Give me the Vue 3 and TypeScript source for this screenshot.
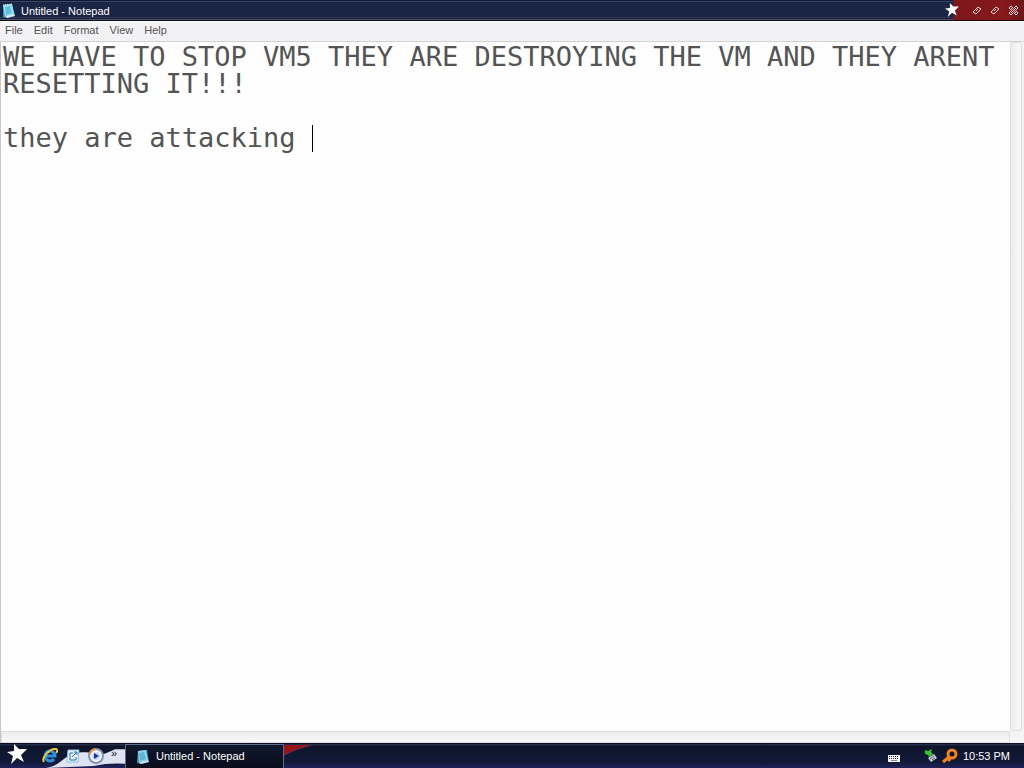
<script setup lang="ts">
import { ref } from 'vue'

const menus: string[] = ['File', 'Edit', 'Format', 'View', 'Help']
const body = ref<string>(
  'WE HAVE TO STOP VM5 THEY ARE DESTROYING THE VM AND THEY ARENT RESETTING IT!!!\n\nthey are attacking ',
)
</script>

<template>
  <div class="desktop">
    <main class="window">
      <header class="titlebar">
        <svg class="note" viewBox="0 0 16 16" aria-hidden="true">
          <path d="M2 2l9-1 3 11-8 3-4-1z" fill="#3f93b5" />
          <path d="M2 2l9-1 2 10-9 2z" fill="#9be2f2" />
          <path d="M4 4l5-1 2 7-6 2z" fill="#62bfdc" />
          <path d="M2 2l9-1" stroke="#e4f8fc" stroke-dasharray="1 1" />
          <path d="M4 13l9-2 1 2-8 2z" fill="#d6eef4" />
        </svg>
        <h1>Untitled - Notepad</h1>
        <div class="controls">
          <svg class="star" viewBox="0 0 20 20" aria-hidden="true">
            <path d="M7 0L12 5L20 5L14 11L17 18L10 14L4 20L6 12L0 8L7 7z" fill="#fff" />
          </svg>
          <button type="button" aria-label="Minimize">
            <svg viewBox="0 0 11 11"><path d="M1 7l5-5 3 2-5 5zM4 6l2-2M6 7l1-1" /></svg>
          </button>
          <button type="button" aria-label="Restore">
            <svg viewBox="0 0 11 11"><path d="M1 7l5-5 3 2-5 5zM4 6l2-2M6 7l1-1" /></svg>
          </button>
          <button type="button" aria-label="Close">
            <svg viewBox="0 0 11 11"><path d="M1 3l2-2 2.500 2.500L8 1l2 2-2.500 2.500L10 8l-2 2-2.500-2.500L3 10 1 8l2.500-2.500zM3 3l5 5M8 3L3 8" /></svg>
          </button>
        </div>
      </header>
      <nav class="menubar" aria-label="Menu">
        <button v-for="m in menus" :key="m" type="button">{{ m }}</button>
      </nav>
      <section class="editor">
        <div class="page">
          <textarea v-model="body" aria-label="Document text" spellcheck="false"></textarea>
          <span class="caret" aria-hidden="true"></span>
        </div>
        <div class="vbar"></div>
        <div class="hbar"></div>
        <div class="corner"></div>
      </section>
    </main>
    <footer class="taskbar">
      <button class="start" type="button" aria-label="Start">
        <svg viewBox="0 0 20 20"><path d="M7 0L12 5L20 5L14 11L17 18L10 14L4 20L6 12L0 8L7 7z" fill="#fff" /></svg>
      </button>
      <div class="quick">
        <svg class="swoosh" viewBox="0 0 84 24" preserveAspectRatio="none" aria-hidden="true">
          <path d="M4 24C20 22 22 10 38 9C52 8 54 13 64 10L74 6H84V20Q68 19 52 22z" fill="#dfe2f0" />
        </svg>
        <button type="button" aria-label="Internet Explorer">
          <svg viewBox="0 0 16 16">
            <path d="M12 11a5 5 0 1 1 1-3H4" fill="none" stroke="#2c8fdc" stroke-width="3" />
            <path d="M2 14C-1 10 8 0 14 1c2 1 1 3 0 4" fill="none" stroke="#e9c63d" stroke-width="2" />
          </svg>
        </button>
        <button type="button" aria-label="Show Desktop">
          <svg viewBox="0 0 16 16">
            <path d="M3 2h11l-1 12H2z" fill="#e4f2fb" stroke="#8fc0e2" stroke-width="1" />
            <path d="M8 5H5v7h6V9M7 9l5-5M9 4h3v3" fill="none" stroke="#2870ad" stroke-width="1" />
          </svg>
        </button>
        <button type="button" aria-label="Media Player">
          <svg viewBox="0 0 16 16">
            <circle cx="8" cy="8" r="7" fill="#f4f7ff" stroke="#8493b4" stroke-width="2" />
            <path d="M2 6a6 6 0 0 1 6-5" fill="none" stroke="#e58b36" stroke-width="2" />
            <circle cx="8" cy="8" r="4" fill="#c7dafa" />
            <path d="M6 5l5 3-5 3z" fill="#16369a" />
          </svg>
        </button>
        <button class="more" type="button" aria-label="More">»</button>
      </div>
      <button class="task" type="button">
        <svg class="note" viewBox="0 0 16 16" aria-hidden="true">
          <path d="M3 2l9-1 2 12-8 2-4-1z" fill="#3f93b5" />
          <path d="M3 2l8-1 2 10-9 2z" fill="#8fd4ea" />
          <path d="M4 4l5-1 2 7-6 2z" fill="#62b3d8" />
          <path d="M4 13l9-2 1 2-8 2z" fill="#c6e2ee" />
        </svg>
        <span>Untitled - Notepad</span>
      </button>
      <svg class="flag" viewBox="0 0 30 24" aria-hidden="true">
        <path d="M0 2h28Q14 5 0 12z" fill="#971419" />
        <path d="M0 12Q14 5 28 2" fill="none" stroke="#5b3348" />
      </svg>
      <div class="tray">
        <svg class="keyboard" viewBox="0 0 12 8" aria-label="Keyboard">
          <rect y="1" width="12" height="7" fill="#f4f4f4" />
          <path d="M1 2.500h10M1 4.500h10" stroke="#23233a" stroke-dasharray="1 1" />
          <path d="M3 6.500h6" stroke="#8a8a98" />
        </svg>
        <svg class="usb" viewBox="0 0 14 15" aria-label="Safely Remove Hardware">
          <path d="M4 10l6-4 3 4-6 4z" fill="#c6ccd2" />
          <path d="M6 11l4-3M8 12l3-2" stroke="#59606c" />
          <path d="M1 2l3 1 4-2-1 3 2 2-4 3-1-2-3-1z" fill="#34c434" />
        </svg>
        <svg class="finder" viewBox="0 0 16 16" aria-label="Search">
          <circle cx="10" cy="6" r="4" fill="none" stroke="#f08322" stroke-width="3" />
          <path d="M7 9l-6 5M5 9l3 4" stroke="#f08322" stroke-width="3" />
        </svg>
        <time>10:53 PM</time>
      </div>
    </footer>
  </div>
</template>

<style>
html,
body {
  margin: 0;
  overflow: hidden;
}
</style>

<style scoped>
.desktop {
  display: flex;
  flex-direction: column;
  height: 100vh;
  font-family: 'Liberation Sans', sans-serif;
  font-size: 11px;
  line-height: 13px;
}
button {
  margin: 0;
  padding: 0;
  border: 0;
  background: none;
  color: inherit;
  font: inherit;
}
svg {
  display: block;
  flex: none;
}
.window {
  flex: 1;
  min-height: 0;
  display: flex;
  flex-direction: column;
}
.titlebar {
  display: flex;
  align-items: center;
  flex: none;
  height: 21px;
  box-sizing: border-box;
  padding-left: 1px;
  background: linear-gradient(#101a38 0 1px, #38425e 1px 2px, #1a2645 2px, #1a2344 17px, #363b5a 17px 18px, #151a38 18px 19px, #56566c 19px 20px, #080a18 20px);
  color: #fff;
}
.note {
  width: 16px;
  height: 16px;
}
h1 {
  flex: 1;
  margin: 0 0 0 4px;
  padding-top: 2px;
  font-size: 11px;
  font-weight: 400;
}
.controls {
  display: flex;
  align-items: center;
  align-self: stretch;
  gap: 7px;
  padding-right: 5px;
  background: linear-gradient(90deg, transparent 8px, #7d171b 9px, #86191c 60px, #6b1519 100%);
  border-bottom: 1px solid #1a0609;
}
.star {
  width: 14px;
  height: 14px;
  margin-right: 6px;
}
.controls button svg {
  width: 11px;
  height: 11px;
  fill: none;
  stroke: #ecd6d6;
}
.menubar {
  display: flex;
  flex: none;
  height: 21px;
  box-sizing: border-box;
  gap: 11px;
  padding: 0 5px 3px;
  background: #f2f1f3;
  border-top: 1px solid #f8fdf8;
  border-bottom: 1px solid #cfd3d2;
  color: #555;
}
.editor {
  flex: 1;
  min-height: 0;
  display: grid;
  grid-template: minmax(0, 1fr) 12px / minmax(0, 1fr) 14px;
  background: #f4f4f4;
  border-left: 1px solid #c6c6cc;
}
.page {
  position: relative;
  background: #fefefe;
  font: 27px/27px 'DejaVu Sans Mono', monospace;
}
textarea {
  display: block;
  width: 100%;
  height: 100%;
  box-sizing: border-box;
  padding: 1px 2px;
  border: 0;
  outline: 0;
  resize: none;
  overflow: hidden;
  background: none;
  color: #545454;
  font: inherit;
  caret-color: transparent;
}
.caret {
  position: absolute;
  top: 83px;
  left: calc(2px + 19ch);
  width: 1px;
  height: 27px;
  background: #000;
}
.vbar {
  margin-right: 2px;
  border: 1px solid #dedee1;
  border-radius: 3px;
  background: linear-gradient(90deg, #ececee, #fafafa);
}
.hbar {
  border: 1px solid #dcdcdf;
  background: linear-gradient(#ececee, #fafafa);
}
.corner {
  background: #f4f4f5;
}
.taskbar {
  display: flex;
  flex: none;
  height: 25px;
  background: linear-gradient(#0c1020 0 1px, #232c48 1px 2px, #0d1429 3px, #121a3a 20px, #1d2158 24px);
  color: #fff;
}
.start {
  width: 42px;
  padding: 0 0 4px 7px;
}
.start svg {
  width: 20px;
  height: 20px;
}
.quick {
  position: relative;
  display: flex;
  align-items: center;
  gap: 7px;
  width: 83px;
}
.swoosh {
  position: absolute;
  inset: 0;
  width: 100%;
  height: 100%;
}
.quick button {
  position: relative;
}
.quick button svg {
  width: 16px;
  height: 16px;
}
.quick .more {
  padding-bottom: 4px;
  color: #101428;
}
.task {
  display: flex;
  align-items: center;
  gap: 5px;
  width: 159px;
  margin-top: 1px;
  padding-left: 9px;
  border: 1px solid #5e6d8c;
  border-bottom: 0;
  background: linear-gradient(#10182c, #090d1c);
}
.flag {
  width: 30px;
  height: 24px;
}
.tray {
  display: flex;
  align-items: center;
  margin-left: auto;
  padding-right: 14px;
}
.keyboard {
  width: 12px;
  height: 8px;
  margin: 4px 24px 0 0;
}
.usb {
  width: 14px;
  height: 15px;
  margin-right: 4px;
}
.finder {
  width: 16px;
  height: 16px;
  margin-right: 5px;
}
time {
  padding-top: 1px;
}
</style>
